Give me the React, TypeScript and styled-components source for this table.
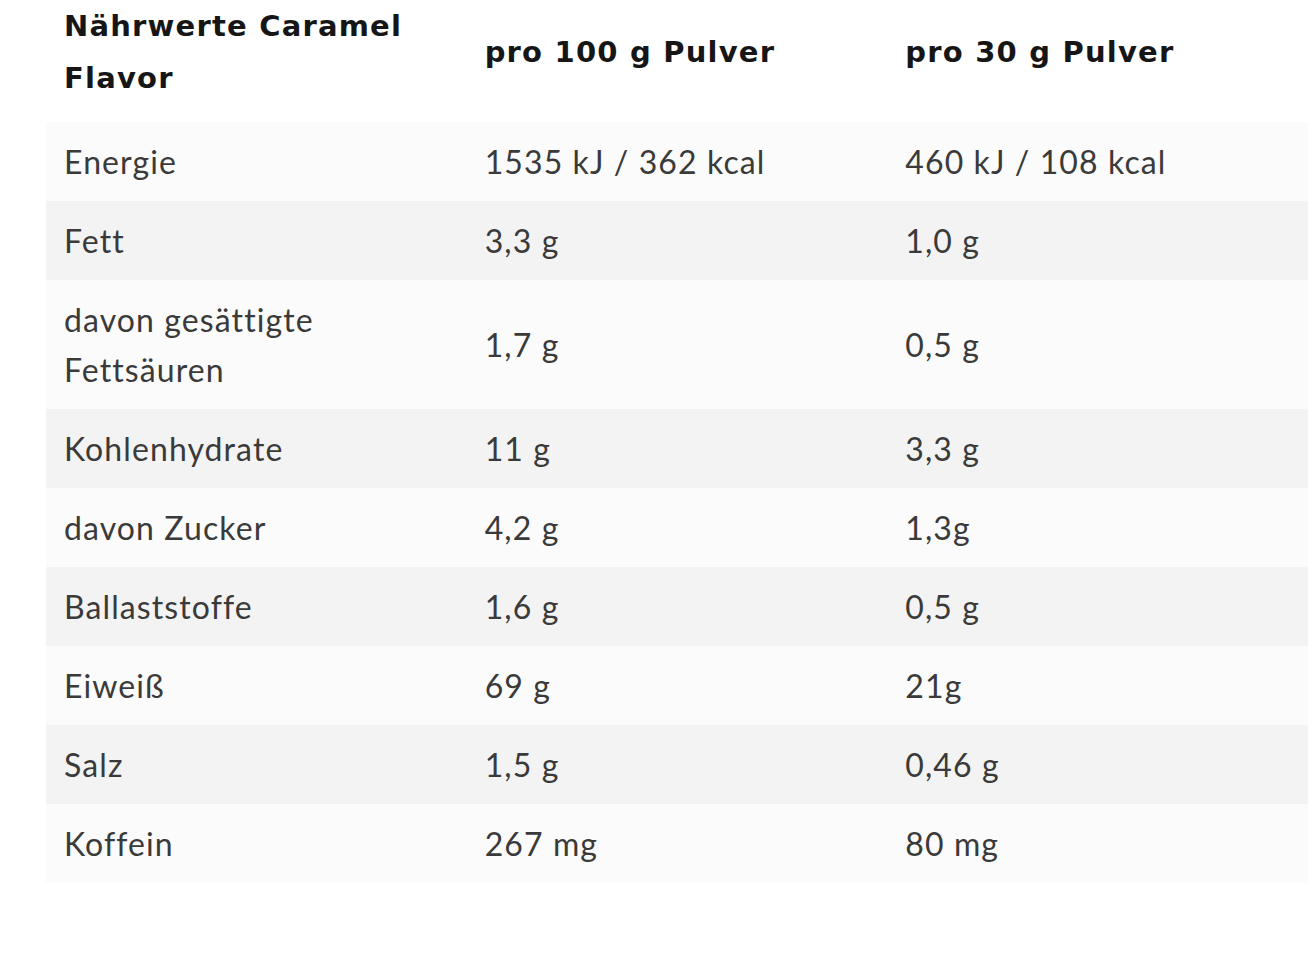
import styled, { createGlobalStyle } from 'styled-components';

const GlobalStyle = createGlobalStyle`
  html, body {
    margin: 0;
    padding: 0;
    background: #ffffff;
  }
  body {
    overflow: hidden;
  }
`;

const Page = styled('div')`
  padding: 0 6px 0 46px;
  // page is scrolled a bit, the header padding is cut off at the top
  margin-top: -18px;
`;

const Table = styled('table')`
  width: 100%;
  border-collapse: collapse;
  table-layout: fixed;
  font-family: 'Lato', 'Liberation Sans', sans-serif;
`;

const HeadCell = styled('th')`
  text-align: left;
  vertical-align: middle;
  padding: 18px 50px 18px 18px;
  font-family: 'DejaVu Sans', 'Liberation Sans', sans-serif;
  font-weight: 700;
  font-size: 29px;
  line-height: 52px;
  letter-spacing: 1.2px;
  color: #161616;
  background: #ffffff;
`;

const Row = styled('tr')<{ $shaded: boolean }>`
  background: ${(p) => (p.$shaded ? '#f3f3f3' : '#fbfbfb')};
`;

const Cell = styled('td')`
  padding: 14.5px 60px 14.5px 18px;
  vertical-align: middle;
  font-size: 32px;
  line-height: 50px;
  letter-spacing: 1.1px;
  color: #3a3a3a;
`;

const rows: [string, string, string][] = [
  ['Energie', '1535 kJ / 362 kcal', '460 kJ / 108 kcal'],
  ['Fett', '3,3 g', '1,0 g'],
  ['davon gesättigte Fettsäuren', '1,7 g', '0,5 g'],
  ['Kohlenhydrate', '11 g', '3,3 g'],
  ['davon Zucker', '4,2 g', '1,3g'],
  ['Ballaststoffe', '1,6 g', '0,5 g'],
  ['Eiweiß', '69 g', '21g'],
  ['Salz', '1,5 g', '0,46 g'],
  ['Koffein', '267 mg', '80 mg'],
];

const App = () => {
  return (
    <>
      <GlobalStyle />
      <Page>
        <Table>
          <thead>
            <tr>
              <HeadCell>Nährwerte Caramel Flavor</HeadCell>
              <HeadCell>pro 100 g Pulver</HeadCell>
              <HeadCell>pro 30 g Pulver</HeadCell>
            </tr>
          </thead>
          <tbody>
            {rows.map(([name, per100, per30], i) => (
              <Row key={name} $shaded={i % 2 === 1}>
                <Cell>{name}</Cell>
                <Cell>{per100}</Cell>
                <Cell>{per30}</Cell>
              </Row>
            ))}
          </tbody>
        </Table>
      </Page>
    </>
  );
};

export default App;
